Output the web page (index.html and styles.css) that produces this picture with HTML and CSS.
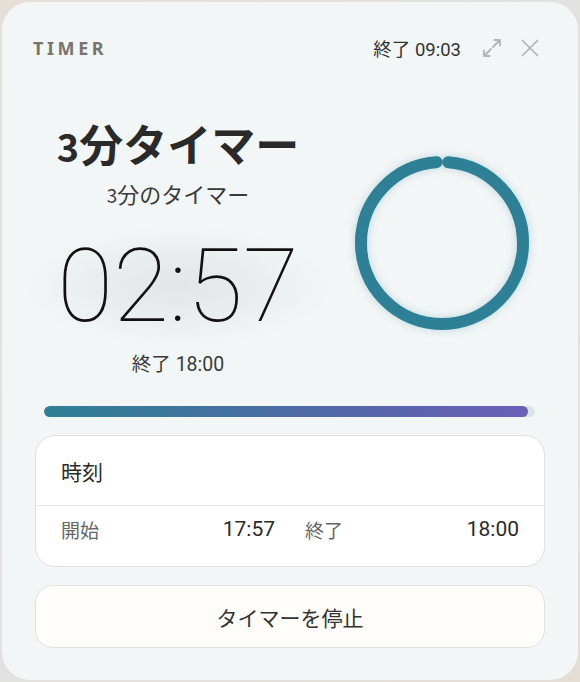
FILE: index.html
```html
<!DOCTYPE html>
<html lang="ja">
<head>
<meta charset="utf-8">
<title>Timer</title>
<link rel="stylesheet" href="styles.css">
</head>
<body>
<div class="card">
  <header class="head">
    <div class="brand">TIMER</div>
    <div class="head-right">
      <span class="end-small">終了 09:03</span>
      <svg class="icon icon-expand" width="20" height="20" viewBox="0 0 20 20" fill="none" stroke="#b3b3b3" stroke-width="1.8" stroke-linecap="round" stroke-linejoin="round">
        <path d="M11 9 L18 2 M12.5 2 H18 V7.5"/>
        <path d="M9 11 L2 18 M2 12.5 V18 H7.5"/>
      </svg>
      <svg class="icon" width="18" height="18" viewBox="0 0 18 18" fill="none" stroke="#b3b3b3" stroke-width="1.7" stroke-linecap="round">
        <path d="M1.5 1.5 L16.5 16.5 M16.5 1.5 L1.5 16.5"/>
      </svg>
    </div>
  </header>

  <section class="hero">
    <div class="hero-left">
      <h1 class="title"><span class="digit">3</span>分タイマー</h1>
      <div class="subtitle"><span class="digit">3</span>分のタイマー</div>
      <div class="count">02:57</div>
      <div class="end-label">終了 18:00</div>
    </div>
    <div class="hero-right">
      <svg class="ring" width="192" height="190" viewBox="0 0 192 190">
        <circle cx="96" cy="95" r="81" fill="none" stroke="#2e8096" stroke-width="12" stroke-linecap="round" stroke-dasharray="496 12.9" stroke-dashoffset="-6.45" transform="rotate(-90 96 95)"/>
      </svg>
    </div>
  </section>

  <div class="bar"><div class="bar-fill" style="width:98.6%"></div></div>

  <section class="panel">
    <div class="panel-title">時刻</div>
    <div class="panel-row">
      <div class="pair"><span class="lbl">開始</span><span class="val">17:57</span></div>
      <div class="pair"><span class="lbl">終了</span><span class="val">18:00</span></div>
    </div>
  </section>

  <button class="stop">タイマーを停止</button>
</div>
</body>
</html>
```

FILE: styles.css
```css
* { box-sizing: border-box; }
html, body { margin: 0; padding: 0; }
body {
  width: 580px;
  height: 682px;
  padding: 2px;
  background: linear-gradient(135deg, #e6dfd8 0%, #e2e2e2 50%, #e4ddd6 100%);
  font-family: "Noto Sans CJK JP", "Noto Sans", sans-serif;
  color: #2b2b2b;
}
.card {
  width: 576px;
  height: 678px;
  border-radius: 28px;
  background: #f3f6f6;
  padding: 34px 39px 0 31px;
  display: flex;
  flex-direction: column;
}
.head {
  display: flex;
  justify-content: space-between;
  align-items: center;
  height: 24px;
}
.brand {
  font-family: "Noto Sans", "Open Sans", sans-serif;
  font-weight: 700;
  font-size: 18px;
  letter-spacing: 3.6px;
  color: #7b736d;
}
.head-right {
  display: flex;
  align-items: center;
}
.end-small {
  font-family: "Roboto", "Noto Sans CJK JP", sans-serif;
  font-size: 18.5px;
  color: #333;
  margin-right: 21px;
}
.icon-expand { margin-right: 19px; }
.hero {
  display: grid;
  grid-template-columns: 290px 192px;
  column-gap: 23px;
  margin-top: 59px;
}
.hero-left {
  display: flex;
  flex-direction: column;
  align-items: center;
}
.digit { font-size: 0.86em; }
.title {
  margin: 0;
  font-size: 44px;
  line-height: 48px;
  font-weight: 700;
  color: #2a2a2a;
}
.subtitle {
  margin-top: 8px;
  font-size: 22px;
  line-height: 30px;
  color: #3a3a3a;
}
.count {
  margin-top: 16px;
  font-family: "Roboto", sans-serif;
  font-weight: 100;
  font-size: 102px;
  line-height: 120px;
  color: #111;
  padding: 0 34px;
  background: radial-gradient(ellipse 50% 50% at 50% 50%, rgba(0,0,0,0.065) 0%, rgba(0,0,0,0.035) 55%, rgba(0,0,0,0) 100%);
}
.end-label {
  margin-top: 6px;
  font-family: "Roboto", "Noto Sans CJK JP", sans-serif;
  font-size: 19.5px;
  line-height: 26px;
  color: #3a3a3a;
}
.hero-right {
  padding-top: 29px;
}
.ring {
  display: block;
}
.ring circle {
  filter: drop-shadow(0 0 5px rgba(46,128,150,0.28));
}
.bar {
  margin: 28px 0 0 11px;
  width: 491px;
  height: 11px;
  border-radius: 6px;
  background: #dce4ea;
  overflow: hidden;
}
.bar-fill {
  height: 100%;
  border-radius: 6px;
  background: linear-gradient(90deg, #2e8096 0%, #4f6aa5 55%, #6b5eb8 100%);
}
.panel {
  margin: 18px 0 0 2px;
  width: 510px;
  height: 132px;
  background: #fff;
  border: 1px solid #e0e0e0;
  border-radius: 20px;
}
.panel-title {
  height: 70px;
  padding: 0 25px;
  display: flex;
  align-items: center;
  font-size: 21px;
  font-weight: 400;
  color: #2a2a2a;
  border-bottom: 1px solid #e6e6e6;
}
.panel-row {
  display: flex;
  padding: 0 25px;
  height: 46px;
  align-items: center;
  gap: 30px;
}
.pair {
  flex: 1;
  display: flex;
  justify-content: space-between;
  align-items: center;
}
.lbl {
  font-size: 19px;
  color: #666;
}
.val {
  font-family: "Roboto", sans-serif;
  font-size: 21px;
  color: #2a2a2a;
}
.stop {
  margin: 18px 0 0 2px;
  width: 510px;
  height: 63px;
  background: #fefdf9;
  border: 1.5px solid #e2e0dc;
  border-radius: 18px;
  font-family: "Noto Sans CJK JP", sans-serif;
  font-size: 21px;
  font-weight: 400;
  color: #333;
}
```
